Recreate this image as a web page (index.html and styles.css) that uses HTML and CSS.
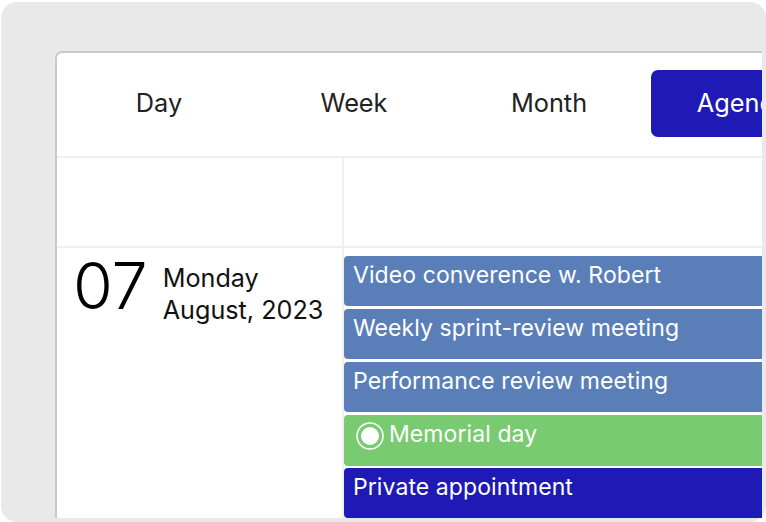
FILE: index.html
```html
<!DOCTYPE html>
<html lang="en">
<head>
<meta charset="utf-8">
<title>Calendar agenda</title>
<link rel="stylesheet" href="styles.css">
</head>
<body>
<div class="frame">
  <div class="viewport">
    <div class="card">
      <nav class="tabs">
        <div class="tab">Day</div>
        <div class="tab">Week</div>
        <div class="tab">Month</div>
        <div class="tab active">Agenda</div>
      </nav>
      <div class="row spacer-row">
        <div class="date-cell"></div>
        <div class="events-cell"></div>
      </div>
      <div class="row">
        <div class="date-cell date">
          <div class="day-num">07</div>
          <div class="day-text">Monday<br>August, 2023</div>
        </div>
        <div class="events-cell events">
          <div class="event blue">Video converence w. Robert</div>
          <div class="event blue">Weekly sprint-review meeting</div>
          <div class="event blue">Performance review meeting</div>
          <div class="event green">
            <svg class="event-icon" viewBox="0 0 28 28" aria-hidden="true">
              <circle cx="14" cy="14" r="13" fill="none" stroke="#fff" stroke-width="1.6"/>
              <circle cx="14" cy="14" r="9" fill="#fff"/>
            </svg>
            <span>Memorial day</span>
          </div>
          <div class="event navy">Private appointment</div>
        </div>
      </div>
    </div>
  </div>
</div>
</body>
</html>
```
FILE: styles.css
```css
html, body {
  margin: 0;
  padding: 0;
  background: #fff;
}
body {
  width: 766px;
  height: 522px;
  overflow: hidden;
  font-family: Inter, "Liberation Sans", sans-serif;
}
.frame {
  box-sizing: border-box;
  width: 765px;
  height: 520px;
  margin: 2px 0 0 1px;
  padding: 49px 4px 4px 54px;
  background: #e9e9e9;
  border-radius: 16px;
  display: flex;
}
.viewport {
  flex: 1;
  overflow: hidden;
}
.card {
  box-sizing: border-box;
  width: 1000px;
  height: 600px;
  background: #fff;
  border-left: 2px solid #c9c9c9;
  border-top: 2px solid #c9c9c9;
  border-top-left-radius: 7px;
}
.tabs {
  display: flex;
  gap: 7px;
  align-items: flex-start;
  padding: 17px 0 0 8px;
  height: 86px;
  border-bottom: 2px solid #efefef;
}
.tab {
  flex: 0 0 188px;
  height: 67px;
  padding-bottom: 3px;
  box-sizing: border-box;
  border-radius: 7px;
  display: flex;
  align-items: center;
  justify-content: center;
  font-size: 25.3px;
  color: #222;
}
.tab.active {
  flex-basis: 184px;
  margin-left: 1px;
  background: #1f1ab5;
  color: #fff;
}
.row {
  display: flex;
}
.spacer-row {
  height: 88px;
  border-bottom: 2px solid #efefef;
}
.date-cell {
  flex: 0 0 287px;
  box-sizing: border-box;
  border-right: 2px solid #efefef;
}
.events-cell {
  flex: 1;
}
.date {
  display: flex;
  align-items: flex-start;
  gap: 15px;
  padding: 5px 0 0 16px;
}
.day-num {
  font-size: 64.5px;
  font-weight: 300;
  line-height: 66px;
  color: #000;
}
.day-text {
  font-size: 25.2px;
  line-height: 32px;
  color: #111;
  margin-top: 9px;
}
.events {
  display: flex;
  flex-direction: column;
  gap: 3px;
  padding-top: 8px;
}
.event {
  height: 50px;
  box-sizing: border-box;
  padding: 4px 9px 0;
  border-radius: 4px;
  font-size: 23px;
  line-height: 30px;
  color: #fff;
  letter-spacing: 0.08px;
  display: flex;
  align-items: flex-start;
}
.blue { background: #5a7fb8; }
.green {
  background: #78cb70;
  height: 51px;
  padding-left: 12px;
  gap: 5px;
}
.navy {
  background: #1f1ab5;
  margin-top: -1px;
}
.event-icon {
  width: 28px;
  height: 28px;
  margin-top: 3px;
  flex: none;
}
```
